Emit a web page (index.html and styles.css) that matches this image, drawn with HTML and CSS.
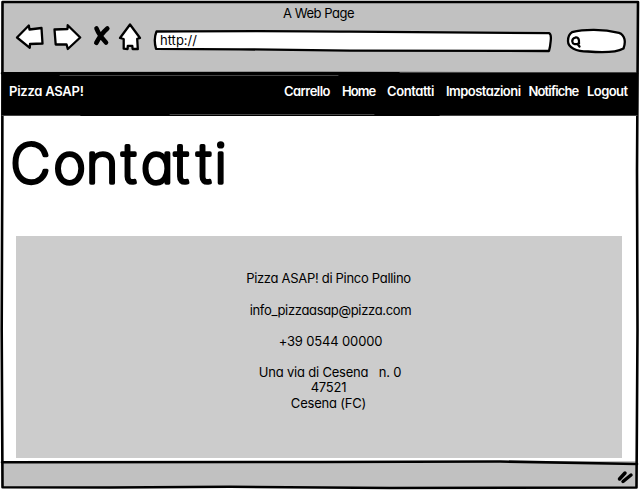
FILE: index.html
```
<!DOCTYPE html>
<html lang="it">
<head>
<meta charset="utf-8">
<title>A Web Page</title>
<link rel="stylesheet" href="styles.css">
</head>
<body>
<div class="window">
  <header class="chrome">
    <div class="title"><span>A Web Page</span></div>
    <div class="toolbar">
      <svg class="buttons" viewBox="14 20 130 34" width="130" height="34">
        <path d="M17 37.5 28.8 25.5 29.5 29.5 41.5 28 42.500 43.500 30 44 29.800 47.800Z"/>
        <path d="M54.500 29.500 67.500 29 67.700 25.200 80.200 37.500 67.800 49 66.500 44.300 55.700 44.500Z"/>
        <path class="cross" d="M96.500 28.500Q99 35 106 42.500M107.300 28.500Q101 34 96.300 42.800"/>
        <path d="M130 24.500 140 38 137.200 38.800 137.800 49 132.600 49 132.300 45.800 127.800 45.800 127.600 49 123.700 48.700 123.700 39 120 38Z"/>
      </svg>
      <div class="address">
        <svg viewBox="153 28 400 26" width="400" height="26"><path d="M156.500 31.500Q280 30.500 350 31.700L549 33.200Q551.500 34 550.700 41 550.200 47 549 51L350 50.600 240 49.300 156 48.800Q153.300 39 156.500 31.500Z"/></svg>
        <span>http://</span>
      </div>
      <svg class="search" viewBox="565 27 64 28" width="64" height="28">
        <path d="M572 32.200C584 29.200 603 29 619 32.800 625 35 626 42 623.500 48.500 617 52 602 52.800 588 51.500 576 51.500 568 47.500 568 41 568 37 569 34 572 32.200Z"/>
        <path d="M575.500 37.500C578 37 579.500 39 579 43.500 575 45 572.500 44 572.300 41.500 572 39 573.500 38 575.500 37.500ZM577.500 44 579.500 46.500"/>
      </svg>
    </div>
  </header>
  <nav class="nav">
    <span class="brand">Pizza ASAP!</span>
    <span class="n1">Carrello</span><span class="n2">Home</span><span class="n3">Contatti</span><span class="n4">Impostazioni</span><span class="n5">Notifiche</span><span class="n6">Logout</span>
  </nav>
  <main class="page">
    <h1><svg width="240" height="88" viewBox="8 120 240 88"><text y="183" x="10.500 53.500 86 121.500 141 174 196.500 214.500">Contatti</text></svg></h1>
    <section class="card">
      <p class="name">Pizza ASAP! di Pinco Pallino</p>
      <p class="mail">info_pizzaasap@pizza.com</p>
      <p class="phone">+39 0544 00000</p>
      <p class="address-lines"><span>Una via di Cesena &nbsp; n. 0</span><br><span class="zip">47521</span><br><span class="city">Cesena (FC)</span></p>
    </section>
  </main>
  <footer class="status"></footer>
  <svg class="frame" viewBox="0 0 640 490" width="640" height="490">
    <path d="M2.500 2 638 2 637 170 637.500 330 636.500 487.500 390 488 230 486.800 110 487.500 2.500 487.200 1.700 330 2.300 170Z"/>
    <path d="M2 462.300 320 462 500 461.500 637 464"/>
    <path d="M2 73.200 320 73 637 73.500"/>
    <path class="hair" d="M60 75.500H338M170 114.500 374 114.500M400 72.500H636M2 115.500H80M440 115.500H637"/>
    <path class="grip" d="M619.500 479 625 473M623 481.500 631 475"/>
  </svg>
</div>
</body>
</html>
```
FILE: styles.css
```
* { box-sizing: border-box; }
body {
  margin: 0;
  background: #fff;
  font-family: Inter, "Open Sans", sans-serif;
  font-feature-settings: "cv11";
  font-size: 13px;
  line-height: 16px;
  color: #000;
}
.window {
  position: relative;
  width: 640px;
  height: 490px;
  display: flex;
  flex-direction: column;
  padding: 2px 3px 3px 2px;
  overflow: hidden;
}
.chrome { height: 71px; background: #c1c1c1; }
.title { height: 18px; padding: 3px 0 0 281px; }
.title span { letter-spacing: -0.45px; }
.toolbar { display: flex; align-items: flex-start; padding-left: 12px; }
svg { display: block; fill: #fff; stroke: #000; stroke-width: 2.3; stroke-linejoin: round; stroke-linecap: round; }
.cross { fill: none; stroke-width: 4.6; }
.address { width: 400px; margin: 8px 0 0 9px; display: grid; }
.address > * { grid-area: 1 / 1; }
.address span { padding: 4px 0 0 7px; z-index: 1; }
.search { margin: 7px 0 0 12px; }
.nav {
  height: 43px;
  background: #000;
  color: #fff;
  display: flex;
  align-items: flex-start;
  padding: 10px 0 0 7px;
  font-weight: 600;
  white-space: nowrap;
  letter-spacing: -0.55px;
}
.brand { width: 275px; letter-spacing: -0.25px; }
.n1 { width: 58px; }
.n2 { width: 45px; letter-spacing: -0.9px; }
.n3 { width: 59px; letter-spacing: -0.4px; }
.n4 { width: 82.500px; }
.n5 { width: 58.500px; letter-spacing: -0.85px; }
.page { flex: 1; background: #fff; padding: 4px 13px 0 14px; }
h1 { margin: 0 0 0 -8px; height: 116px; font-size: 55px; font-weight: 200; }
h1 svg {
  overflow: visible;
  fill: #000;
  stroke-width: 3.5;
}
.card { width: 606px; height: 222px; background: #ccc; padding-top: 34px; text-align: center; }
.card p { margin: 0 0 15.500px 19px; white-space: pre; letter-spacing: -0.3px; }
.card .mail { margin-left: 23px; letter-spacing: -0.33px; }
.card .phone { margin-left: 23px; letter-spacing: -0.15px; }
.card .address-lines { margin-left: 22px; line-height: 15.600px; letter-spacing: -0.2px; }
.zip, .city { margin-right: 3px; }
.status { height: 26px; background: #c1c1c1; }
.frame { position: absolute; inset: 0; pointer-events: none; }
.frame path { fill: none; stroke-width: 2.600; }
.frame .hair { stroke: #444; stroke-width: 1; }
.frame .grip { stroke-width: 3.500; }
```
